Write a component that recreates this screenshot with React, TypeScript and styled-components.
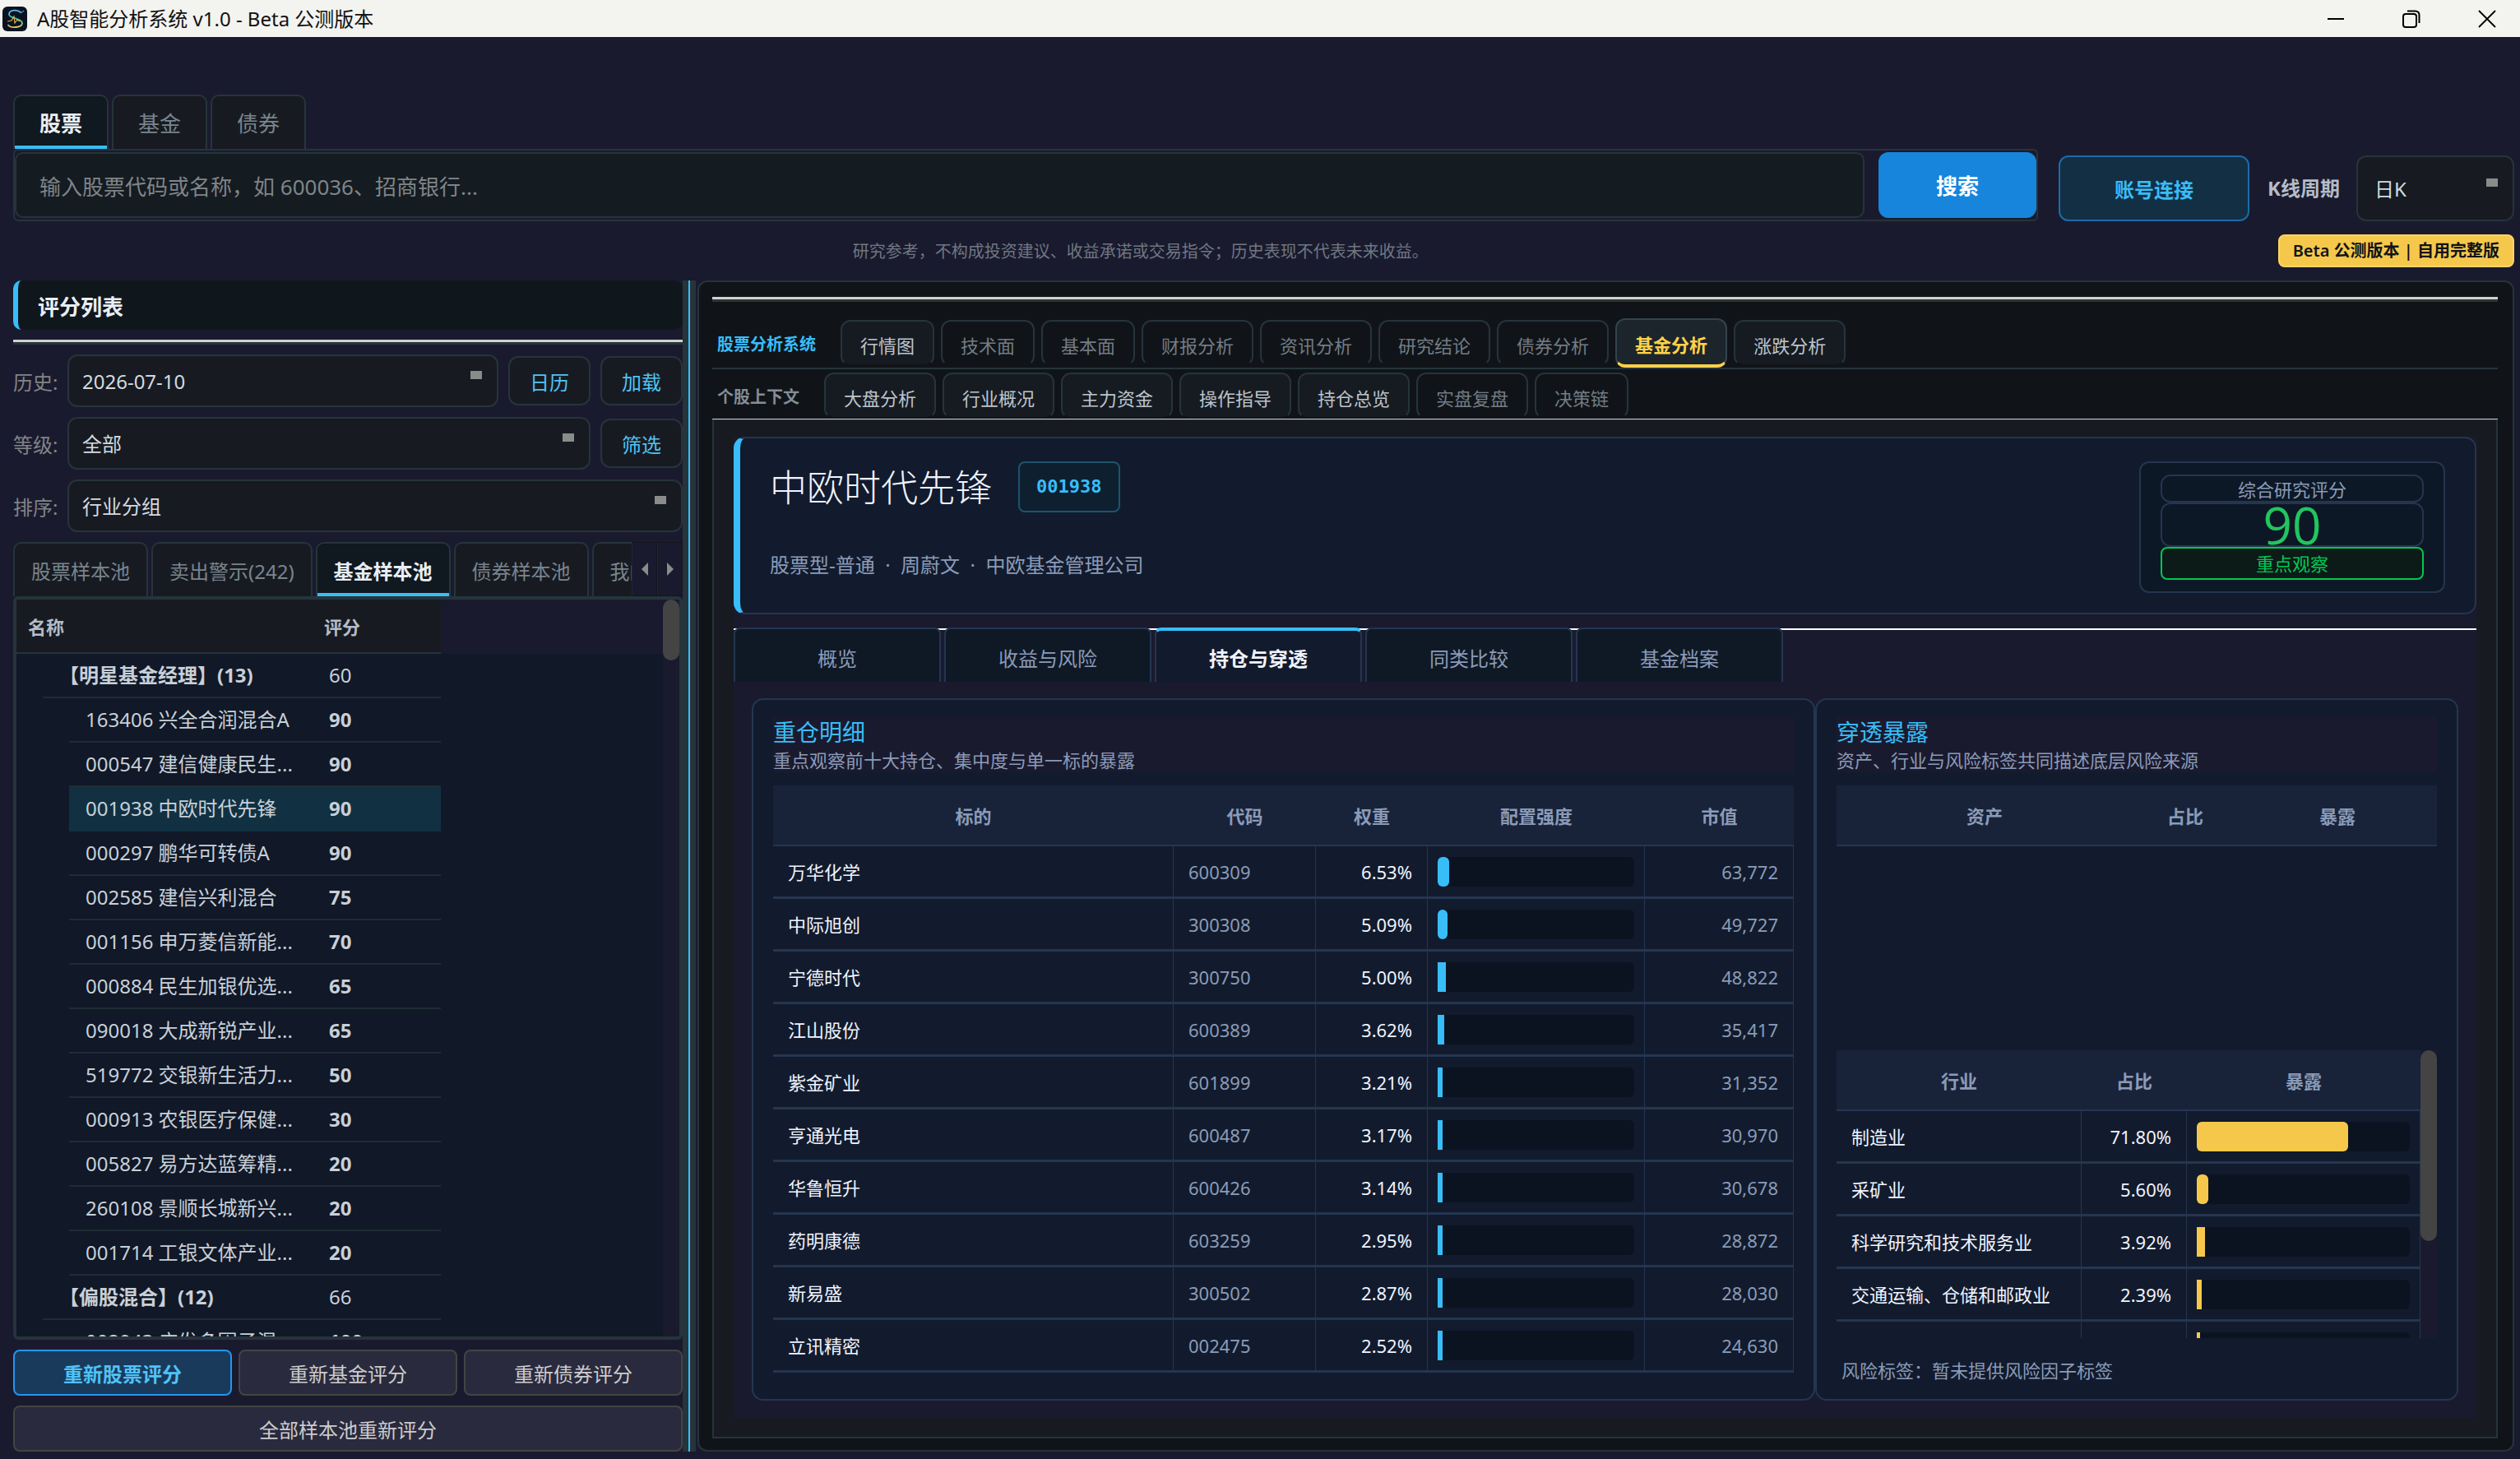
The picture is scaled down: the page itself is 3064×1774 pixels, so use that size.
import React from 'react';
import styled, { createGlobalStyle, css } from 'styled-components';

const SANS = `"Noto Sans", "Noto Sans CJK SC", sans-serif`;

const c = {
  page: '#1a1a2e',
  panel: '#101418',
  surface: '#171b21',
  line: '#26343b',
  card: '#121b2d',
  cardLine: '#253550',
  head: '#18233a',
  accent: '#38bdf8',
  muted: '#8b9bb8',
  dim: '#7a848e',
  text: '#c8d0d8',
  gold: '#f5c84c',
  selected: '#113142',
};

const GlobalStyle = createGlobalStyle`
  *, *::before, *::after { box-sizing: border-box; }
  body { margin: 0; background: ${c.page}; font-family: ${SANS}; color: ${c.text}; }
  button, input, select { font-family: inherit; margin: 0; }
  button { padding: 0; cursor: pointer; }
`;

const Window = styled.div`
  display: flex;
  flex-direction: column;
  height: 100vh;
  overflow: hidden;
`;

/* ---------- title bar ---------- */

const TitleBar = styled.header`
  display: flex;
  align-items: center;
  flex: none;
  height: 45px;
  padding-left: 3px;
  background: #f3f3f0;
  color: #111;
`;

const AppTitle = styled.h1`
  flex: 1;
  margin: 0 0 0 12px;
  font-size: 24px;
  line-height: 36px;
  font-weight: 400;
`;

const WindowControls = styled.div`
  display: flex;
  gap: 12px;
`;

const WindowButton = styled.button`
  display: flex;
  align-items: center;
  justify-content: center;
  width: 80px;
  height: 42px;
  border: 0;
  background: none;
`;

/* ---------- search area ---------- */

const TopArea = styled.section`
  flex: none;
  padding: 70px 7px 16px 16px;
`;

const MarketTabs = styled.div`
  display: flex;
  gap: 4px;
`;

const FolderTab = styled.button<{ $active?: boolean; $size: number }>`
  flex: none;
  height: 66px;
  padding: 0 ${p => (p.$size > 24 ? 30 : 20)}px;
  border: 2px solid ${c.line};
  border-bottom: 0;
  border-radius: 10px 10px 0 0;
  background: ${c.surface};
  color: ${c.dim};
  font-size: ${p => p.$size}px;
  white-space: nowrap;
  ${p =>
    p.$active &&
    css`
      background: #101820;
      color: #e8eef4;
      font-weight: 700;
      box-shadow: inset 0 -4px 0 ${c.accent};
    `}
`;

const SearchRow = styled.div`
  display: flex;
  align-items: flex-end;
`;

const SearchFrame = styled.form`
  display: flex;
  flex: 1;
  gap: 17px;
  padding: 2px 0;
  border: 2px solid ${c.line};
  border-radius: 6px;
`;

const SearchInput = styled.input`
  flex: 1;
  min-width: 0;
  height: 80px;
  padding: 4px 28px 0;
  border: 2px solid ${c.line};
  border-radius: 10px;
  background: #141b21;
  color: ${c.text};
  font-size: 26px;
  &::placeholder {
    color: #808488;
    opacity: 1;
  }
`;

const SearchButton = styled.button`
  width: 192px;
  height: 80px;
  border: 0;
  border-radius: 12px;
  background: #1785dc;
  color: #fff;
  font-size: 26px;
  font-weight: 700;
`;

const AccountButton = styled.button`
  width: 232px;
  height: 80px;
  margin: 0 22px 0 25px;
  border: 2px solid #1c6ba8;
  border-radius: 12px;
  background: #132f44;
  color: ${c.accent};
  font-size: 24px;
  font-weight: 700;
`;

const PeriodLabel = styled.label`
  margin-right: 20px;
  color: #b4bcc8;
  font-size: 24px;
  line-height: 80px;
  font-weight: 700;
`;

const Select = styled.select<{ $large?: boolean }>`
  appearance: none;
  ${p => (p.$large ? 'flex: none; width: 192px;' : 'flex: 1; min-width: 0;')}
  height: ${p => (p.$large ? 80 : 64)}px;
  padding: 0 ${p => (p.$large ? 20 : 16)}px;
  border: 2px solid ${c.line};
  border-radius: 12px;
  background: linear-gradient(#8b8b8b, #8b8b8b) no-repeat right 18px top ${p => (p.$large ? 26 : 18)}px / 14px 10px
    ${c.surface};
  color: #d4dae0;
  font-size: 24px;
`;

const NoticeRow = styled.div`
  display: flex;
  align-items: center;
  margin-top: 16px;
`;

const Notice = styled.p`
  flex: 1;
  margin: 0;
  padding: 2px 12px 0 0;
  color: #6f7782;
  font-size: 20px;
  line-height: 38px;
  text-align: center;
`;

const BetaBadge = styled.span`
  padding: 0 16px;
  border: 2px solid #f8d568;
  border-radius: 8px;
  background: ${c.gold};
  color: #101418;
  font-size: 20px;
  line-height: 36px;
  font-weight: 600;
`;

/* ---------- split body ---------- */

const Body = styled.main`
  display: flex;
  flex: 1;
  min-height: 0;
  padding: 0 7px 9px 16px;
`;

const Sidebar = styled.aside`
  display: flex;
  flex: none;
  flex-direction: column;
  width: 814px;
`;

const SidebarTitle = styled.h2`
  margin: 0 0 12px;
  padding: 4px 0 0 24px;
  border-left: 6px solid ${c.accent};
  border-radius: 10px;
  background: #10171c;
  color: #e8eef4;
  font-size: 26px;
  line-height: 56px;
  font-weight: 700;
`;

const Rule = styled.hr<{ $tone: string }>`
  flex: none;
  width: 100%;
  height: 6px;
  margin: 0;
  border: 0;
  border-top: 3px solid #d0d0d0;
  background: ${p => p.$tone};
`;

const Filters = styled.div`
  display: grid;
  gap: 12px;
  padding: 12px 0;
`;

const FilterRow = styled.div`
  display: flex;
  align-items: center;
  gap: 12px;
`;

const FilterLabel = styled.label`
  width: 54px;
  color: #808488;
  font-size: 24px;
  white-space: nowrap;
`;

const FilterButton = styled.button`
  width: 100px;
  height: 60px;
  border: 2px solid ${c.line};
  border-radius: 12px;
  background: ${c.surface};
  color: #4fc3f7;
  font-size: 24px;
`;

const PoolBar = styled.div`
  display: flex;
`;

const PoolTabs = styled.div`
  display: flex;
  flex: 1;
  gap: 4px;
  min-width: 0;
  overflow: hidden;
`;

const PoolScroll = styled.button`
  display: flex;
  align-items: center;
  justify-content: center;
  flex: none;
  width: 31px;
  height: 66px;
  border: 1px solid #14141f;
  border-left-color: #22223a;
  background: ${c.page};
`;

const TreeFrame = styled.div`
  display: flex;
  flex: 1;
  min-height: 0;
  overflow: hidden;
  border: 4px solid ${c.line};
  border-radius: 6px;
`;

const TreeBody = styled.div`
  flex: 1;
  overflow: hidden;
  background: linear-gradient(${c.page} 66px, #111827 66px);
`;

const Tree = styled.table`
  width: 516px;
  border-spacing: 0;
  table-layout: fixed;
  font-size: 24px;
  th {
    height: 66px;
    padding: 0 14px;
    border-bottom: 2px solid ${c.line};
    background: ${c.surface};
    color: #b4bcc8;
    font-size: 22px;
    text-align: left;
  }
  th:last-child {
    width: 156px;
  }
  td {
    height: 54px;
    padding: 0;
  }
`;

const TreeCell = styled.div<{ $bold?: boolean; $active?: boolean }>`
  height: 54px;
  padding-left: 20px;
  border-bottom: 2px solid ${p => (p.$active ? c.selected : '#1f2d34')};
  background: ${p => (p.$active ? c.selected : 'none')};
  line-height: 52px;
  white-space: nowrap;
  font-weight: ${p => (p.$bold ? 700 : 400)};
`;

const TreeName = styled(TreeCell)`
  margin-left: ${p => (p.$bold ? 32 : 64)}px;
`;

const ScrollTrack = styled.div`
  flex: none;
  width: 20px;
  background: ${c.page};
`;

const ScrollThumb = styled.div<{ $height: number }>`
  height: ${p => p.$height}px;
  border-radius: 10px;
  background: #444;
`;

const Actions = styled.div`
  display: grid;
  grid-template-columns: repeat(3, 1fr);
  gap: 12px 8px;
  padding-top: 12px;
`;

const ActionButton = styled.button<{ $primary?: boolean; $wide?: boolean }>`
  height: 56px;
  border: 2px solid #444;
  border-radius: 8px;
  background: #2a2a3e;
  color: #ccc;
  font-size: 24px;
  ${p => p.$wide && 'grid-column: 1 / -1;'}
  ${p => p.$primary && 'background: #1a3a5c; border-color: #2196f3; color: #4fc3f7; font-weight: 700;'}
`;

const Splitter = styled.div`
  display: flex;
  justify-content: center;
  flex: none;
  width: 16px;
  margin-right: 2px;
  background: ${c.line};
  &::before {
    content: '';
    width: 2px;
    background: ${c.accent};
  }
`;

/* ---------- analysis panel ---------- */

const Panel = styled.section`
  display: flex;
  flex: 1;
  flex-direction: column;
  min-width: 0;
  padding: 18px 18px 14px 16px;
  border: 2px solid ${c.line};
  border-radius: 12px;
  background: ${c.panel};
`;

const NavRow = styled.nav<{ $last?: boolean }>`
  display: flex;
  align-items: flex-end;
  gap: 8px;
  height: ${p => (p.$last ? 61 : 82)}px;
  padding-bottom: ${p => (p.$last ? 0 : 2)}px;
  border-bottom: ${p => (p.$last ? '1px solid #c9c9d0' : `2px solid ${c.line}`)};
`;

const NavTitle = styled.strong<{ $accent?: boolean }>`
  width: ${p => (p.$accent ? 148 : 128)}px;
  padding: 4px 0 0 6px;
  color: ${p => (p.$accent ? c.accent : '#848d97')};
  font-size: 20px;
  line-height: 52px;
`;

const NavTab = styled.button<{ $kind: 'on' | 'off' | 'active' }>`
  height: 56px;
  padding: 4px 22px 0;
  border: 2px solid ${c.line};
  border-bottom: 2px solid transparent;
  border-radius: 12px;
  background: ${p => (p.$kind === 'on' ? '#161b22' : 'none')};
  background-clip: padding-box;
  color: ${p => (p.$kind === 'on' ? '#bcc4cc' : '#737c85')};
  font-size: 22px;
  white-space: nowrap;
  ${p =>
    p.$kind === 'active' &&
    css`
      height: 60px;
      margin-bottom: -2px;
      border-color: #33434d;
      border-bottom: 4px solid #ffd24a;
      background: #1c252c;
      color: #ffd24a;
      font-weight: 700;
    `}
`;

const Frame = styled.div`
  display: flex;
  flex: 1;
  flex-direction: column;
  min-height: 0;
  padding: 20px 24px 24px;
  border: 2px solid ${c.line};
  border-top-width: 1px;
  background: ${c.surface};
`;

const Report = styled.div`
  display: flex;
  flex: 1;
  flex-direction: column;
  min-height: 0;
  background: ${c.page};
`;

const FundCard = styled.section`
  display: flex;
  justify-content: space-between;
  padding: 28px 36px 24px;
  border: 2px solid ${c.cardLine};
  border-left: 8px solid ${c.accent};
  border-radius: 14px;
  background: ${c.card};
`;

const FundHeading = styled.div`
  display: flex;
  align-items: center;
  gap: 32px;
`;

const FundName = styled.h2`
  margin: 0;
  padding-top: 2px;
  color: #f0f4ff;
  font-size: 45px;
  line-height: 60px;
  font-weight: 300;
`;

const FundCode = styled.span`
  padding: 0 20px;
  border: 2px solid #1d546c;
  border-radius: 8px;
  background: #0e2030;
  color: ${c.accent};
  font: 700 22px/58px 'DejaVu Sans Mono', monospace;
`;

const FundMeta = styled.p`
  margin: 44px 0 0;
  color: ${c.muted};
  font-size: 24px;
  line-height: 40px;
  white-space: pre;
`;

const ScoreBox = styled.div`
  display: grid;
  width: 372px;
  padding: 14px 24px;
  border: 2px solid ${c.cardLine};
  border-radius: 12px;
  background: #0d1826;
  text-align: center;
`;

const ScoreLabel = styled.div`
  height: 34px;
  border: 2px solid ${c.cardLine};
  border-radius: 12px;
  color: ${c.muted};
  font-size: 22px;
  line-height: 32px;
`;

const ScoreValue = styled.div`
  height: 54px;
  border: 2px solid ${c.cardLine};
  border-radius: 12px;
  color: #22c55e;
  font: 400 62px/50px 'Open Sans', sans-serif;
`;

const ScoreRating = styled.div`
  height: 40px;
  border: 2px solid #00c853;
  border-radius: 8px;
  background: #0c1a18;
  color: #00c853;
  font-size: 22px;
  line-height: 36px;
`;

const ReportTabs = styled.div`
  display: flex;
  gap: 4px;
  margin-top: 16px;
  background: linear-gradient(#fff, #fff) no-repeat 0 1px / 100% 2px;
`;

const ReportTab = styled.button<{ $active?: boolean }>`
  width: 252px;
  height: 66px;
  padding-top: 4px;
  border: 2px solid ${c.cardLine};
  border-bottom: 0;
  border-radius: 8px 8px 0 0;
  background: #0f1926;
  color: ${c.muted};
  font-size: 24px;
  ${p =>
    p.$active &&
    css`
      padding-top: 2px;
      border-top: 4px solid ${c.accent};
      background: ${c.card};
      color: #f0f4ff;
      font-weight: 700;
    `}
`;

const Cards = styled.div`
  display: grid;
  grid-template-columns: minmax(0, 1fr) 782px;
  flex: 1;
  min-height: 0;
  padding: 20px 22px;
`;

const Card = styled.section`
  display: flex;
  flex-direction: column;
  min-height: 0;
  padding: 20px 24px;
  border: 2px solid ${c.cardLine};
  border-radius: 14px;
  background: ${c.card};
`;

const CardHead = styled.header`
  margin-bottom: 16px;
  background: ${c.page};
`;

const CardTitle = styled.h3`
  margin: 0;
  color: ${c.accent};
  font-size: 28px;
  line-height: 38px;
  font-weight: 400;
`;

const CardHint = styled.p`
  margin: 0;
  color: ${c.muted};
  font-size: 22px;
  line-height: 30px;
`;

const DataTable = styled.table`
  width: 100%;
  border-spacing: 0;
  table-layout: fixed;
  color: #f0f4ff;
  font-size: 22px;
  th {
    height: 74px;
    padding: 0;
    border-bottom: 2px solid ${c.cardLine};
    background: ${c.head};
    color: ${c.muted};
    font-weight: 700;
  }
  td {
    height: 64px;
    padding: 0 18px;
    border-right: 1px solid ${c.cardLine};
    border-bottom: 3px solid ${c.cardLine};
    line-height: 30px;
    white-space: nowrap;
  }
`;

const Cell = styled.td<{ $right?: boolean; $muted?: boolean }>`
  text-align: ${p => (p.$right ? 'right' : 'left')};
  color: ${p => (p.$muted ? c.muted : '#f0f4ff')};
`;

const BarCell = styled.td`
  && {
    padding: 0 12px;
  }
`;

const Track = styled.div`
  height: 36px;
  border-radius: 6px;
  background: #0b1320;
`;

const Fill = styled.div<{ $color: string; $round: boolean }>`
  height: 36px;
  border-radius: ${p => (p.$round ? 6 : 0)}px;
  background: ${p => p.$color};
`;

const AssetArea = styled.div`
  flex: 1;
  min-height: 0;
`;

const IndustryArea = styled.div`
  display: flex;
  flex: none;
  height: 350px;
  margin-top: 16px;
  overflow: hidden;
`;

const TableHolder = styled.div`
  flex: 1;
  min-width: 0;
`;

const RiskNote = styled.p`
  margin: 24px 0 0;
  padding-left: 6px;
  color: ${c.muted};
  font-size: 22px;
  line-height: 30px;
`;

/* ---------- data ---------- */

type TreeRow = { name: string; score: number; group?: boolean; active?: boolean };

const treeRows: TreeRow[] = [
  { name: '【明星基金经理】(13)', score: 60, group: true },
  { name: '163406 兴全合润混合A', score: 90 },
  { name: '000547 建信健康民生...', score: 90 },
  { name: '001938 中欧时代先锋', score: 90, active: true },
  { name: '000297 鹏华可转债A', score: 90 },
  { name: '002585 建信兴利混合', score: 75 },
  { name: '001156 申万菱信新能...', score: 70 },
  { name: '000884 民生加银优选...', score: 65 },
  { name: '090018 大成新锐产业...', score: 65 },
  { name: '519772 交银新生活力...', score: 50 },
  { name: '000913 农银医疗保健...', score: 30 },
  { name: '005827 易方达蓝筹精...', score: 20 },
  { name: '260108 景顺长城新兴...', score: 20 },
  { name: '001714 工银文体产业...', score: 20 },
  { name: '【偏股混合】(12)', score: 66, group: true },
  { name: '002943 广发多因子混...', score: 100 },
];

const holdings: [string, string, number, string][] = [
  ['万华化学', '600309', 6.53, '63,772'],
  ['中际旭创', '300308', 5.09, '49,727'],
  ['宁德时代', '300750', 5.0, '48,822'],
  ['江山股份', '600389', 3.62, '35,417'],
  ['紫金矿业', '601899', 3.21, '31,352'],
  ['亨通光电', '600487', 3.17, '30,970'],
  ['华鲁恒升', '600426', 3.14, '30,678'],
  ['药明康德', '603259', 2.95, '28,872'],
  ['新易盛', '300502', 2.87, '28,030'],
  ['立讯精密', '002475', 2.52, '24,630'],
];

const industries: [string, number | null][] = [
  ['制造业', 71.8],
  ['采矿业', 5.6],
  ['科学研究和技术服务业', 3.92],
  ['交通运输、仓储和邮政业', 2.39],
  ['', null],
];

type Nav = [string, 'on' | 'off' | 'active'];

const systemNav: Nav[] = [
  ['行情图', 'on'],
  ['技术面', 'off'],
  ['基本面', 'off'],
  ['财报分析', 'off'],
  ['资讯分析', 'off'],
  ['研究结论', 'off'],
  ['债券分析', 'off'],
  ['基金分析', 'active'],
  ['涨跌分析', 'on'],
];

const contextNav: Nav[] = [
  ['大盘分析', 'on'],
  ['行业概况', 'on'],
  ['主力资金', 'on'],
  ['操作指导', 'on'],
  ['持仓总览', 'on'],
  ['实盘复盘', 'off'],
  ['决策链', 'off'],
];

const pools = ['股票样本池', '卖出警示(242)', '基金样本池', '债券样本池', '我的自选'];
const reportTabs = ['概览', '收益与风险', '持仓与穿透', '同类比较', '基金档案'];

/* ---------- small parts ---------- */

function AppLogo() {
  return (
    <svg width="30" height="30" viewBox="0 0 30 30" aria-hidden="true">
      <defs>
        <linearGradient id="s" x1="0" y1="0" x2="0" y2="1">
          <stop offset="0" stopColor="#5fb8f0" />
          <stop offset="0.5" stopColor="#2fc9a8" />
          <stop offset="1" stopColor="#e8c85a" />
        </linearGradient>
      </defs>
      <rect width="30" height="30" rx="6" fill="#0b1220" />
      <path
        d="M22 7C18 3 8 4 8 9.500C8 14.500 24 14.500 24 20C24 26 10 26.500 7 22.500"
        fill="none"
        stroke="url(#s)"
        strokeWidth="1.800"
        strokeLinecap="round"
      />
      <path d="M6 18L11 17L14 12L15 20L18 16L21 18" fill="none" stroke="#e0b050" strokeWidth="1.200" />
      <path d="M22 8L26 5" stroke="#4a90c0" strokeWidth="1.200" />
    </svg>
  );
}

function Bar({ value, color }: { value: number; color: string }) {
  return (
    <Track>
      <Fill $color={color} $round={value > 5.05} style={{ width: `round(down, ${value}%, 2px)` }} />
    </Track>
  );
}

function NavTabs({ items }: { items: Nav[] }) {
  return (
    <>
      {items.map(([name, kind]) => (
        <NavTab key={name} $kind={kind}>
          {name}
        </NavTab>
      ))}
    </>
  );
}

/* ---------- app ---------- */

export default function App() {
  return (
    <Window>
      <GlobalStyle />
      <TitleBar>
        <AppLogo />
        <AppTitle>A股智能分析系统 v1.0 - Beta 公测版本</AppTitle>
        <WindowControls>
          <WindowButton aria-label="最小化">
            <svg width="22" height="22" viewBox="0 0 22 22">
              <path d="M1 11H21" stroke="#000" strokeWidth="2" />
            </svg>
          </WindowButton>
          <WindowButton aria-label="还原">
            <svg width="22" height="22" viewBox="0 0 22 22" fill="none" stroke="#000" strokeWidth="2">
              <rect x="1" y="5" width="16" height="16" rx="3" />
              <path d="M6 1.500H16A4.500 4.500 0 0 1 20.500 6V16" />
            </svg>
          </WindowButton>
          <WindowButton aria-label="关闭">
            <svg width="22" height="22" viewBox="0 0 22 22">
              <path d="M1 1L21 21M21 1L1 21" stroke="#000" strokeWidth="1.800" />
            </svg>
          </WindowButton>
        </WindowControls>
      </TitleBar>

      <TopArea>
        <MarketTabs role="tablist">
          {['股票', '基金', '债券'].map((name, i) => (
            <FolderTab key={name} role="tab" aria-selected={i === 0} $active={i === 0} $size={26}>
              {name}
            </FolderTab>
          ))}
        </MarketTabs>
        <SearchRow>
          <SearchFrame onSubmit={e => e.preventDefault()}>
            <SearchInput aria-label="搜索" placeholder="输入股票代码或名称，如 600036、招商银行..." />
            <SearchButton type="submit">搜索</SearchButton>
          </SearchFrame>
          <AccountButton>账号连接</AccountButton>
          <PeriodLabel htmlFor="period">K线周期</PeriodLabel>
          <Select id="period" $large>
            <option>日K</option>
          </Select>
        </SearchRow>
        <NoticeRow>
          <Notice>研究参考，不构成投资建议、收益承诺或交易指令；历史表现不代表未来收益。</Notice>
          <BetaBadge>Beta 公测版本 | 自用完整版</BetaBadge>
        </NoticeRow>
      </TopArea>

      <Body>
        <Sidebar>
          <SidebarTitle>评分列表</SidebarTitle>
          <Rule $tone={c.line} />
          <Filters>
            <FilterRow>
              <FilterLabel htmlFor="history">历史:</FilterLabel>
              <Select id="history">
                <option>2026-07-10</option>
              </Select>
              <FilterButton>日历</FilterButton>
              <FilterButton>加载</FilterButton>
            </FilterRow>
            <FilterRow>
              <FilterLabel htmlFor="level">等级:</FilterLabel>
              <Select id="level">
                <option>全部</option>
              </Select>
              <FilterButton>筛选</FilterButton>
            </FilterRow>
            <FilterRow>
              <FilterLabel htmlFor="order">排序:</FilterLabel>
              <Select id="order">
                <option>行业分组</option>
              </Select>
            </FilterRow>
          </Filters>
          <PoolBar>
            <PoolTabs role="tablist">
              {pools.map((name, i) => (
                <FolderTab key={name} role="tab" aria-selected={i === 2} $active={i === 2} $size={24}>
                  {name}
                </FolderTab>
              ))}
            </PoolTabs>
            <PoolScroll aria-label="向左">
              <svg width="10" height="18" viewBox="0 0 10 18">
                <path d="M9 1V17L1 9Z" fill="#8b8b8b" />
              </svg>
            </PoolScroll>
            <PoolScroll aria-label="向右">
              <svg width="10" height="18" viewBox="0 0 10 18">
                <path d="M1 1V17L9 9Z" fill="#8b8b8b" />
              </svg>
            </PoolScroll>
          </PoolBar>
          <TreeFrame>
            <TreeBody>
              <Tree>
                <thead>
                  <tr>
                    <th>名称</th>
                    <th>评分</th>
                  </tr>
                </thead>
                <tbody>
                  {treeRows.map(row => (
                    <tr key={row.name}>
                      <td>
                        <TreeName $bold={row.group} $active={row.active}>
                          {row.name}
                        </TreeName>
                      </td>
                      <td>
                        <TreeCell $bold={!row.group} $active={row.active}>
                          {row.score}
                        </TreeCell>
                      </td>
                    </tr>
                  ))}
                </tbody>
              </Tree>
            </TreeBody>
            <ScrollTrack>
              <ScrollThumb $height={74} />
            </ScrollTrack>
          </TreeFrame>
          <Actions>
            <ActionButton $primary>重新股票评分</ActionButton>
            <ActionButton>重新基金评分</ActionButton>
            <ActionButton>重新债券评分</ActionButton>
            <ActionButton $wide>全部样本池重新评分</ActionButton>
          </Actions>
        </Sidebar>

        <Splitter />

        <Panel>
          <Rule $tone="#333" />
          <NavRow>
            <NavTitle $accent>股票分析系统</NavTitle>
            <NavTabs items={systemNav} />
          </NavRow>
          <NavRow $last>
            <NavTitle>个股上下文</NavTitle>
            <NavTabs items={contextNav} />
          </NavRow>
          <Frame>
            <Report>
              <FundCard>
                <div>
                  <FundHeading>
                    <FundName>中欧时代先锋</FundName>
                    <FundCode>001938</FundCode>
                  </FundHeading>
                  <FundMeta>{'股票型-普通  ·  周蔚文  ·  中欧基金管理公司'}</FundMeta>
                </div>
                <ScoreBox>
                  <ScoreLabel>综合研究评分</ScoreLabel>
                  <ScoreValue>90</ScoreValue>
                  <ScoreRating>重点观察</ScoreRating>
                </ScoreBox>
              </FundCard>

              <ReportTabs role="tablist">
                {reportTabs.map((name, i) => (
                  <ReportTab key={name} role="tab" aria-selected={i === 2} $active={i === 2}>
                    {name}
                  </ReportTab>
                ))}
              </ReportTabs>

              <Cards>
                <Card>
                  <CardHead>
                    <CardTitle>重仓明细</CardTitle>
                    <CardHint>重点观察前十大持仓、集中度与单一标的暴露</CardHint>
                  </CardHead>
                  <DataTable>
                    <colgroup>
                      <col />
                      <col width="173" />
                      <col width="136" />
                      <col width="264" />
                      <col width="181" />
                    </colgroup>
                    <thead>
                      <tr>
                        <th>标的</th>
                        <th>代码</th>
                        <th>权重</th>
                        <th>配置强度</th>
                        <th>市值</th>
                      </tr>
                    </thead>
                    <tbody>
                      {holdings.map(([name, code, weight, value]) => (
                        <tr key={code}>
                          <Cell>{name}</Cell>
                          <Cell $muted>{code}</Cell>
                          <Cell $right>{weight.toFixed(2)}%</Cell>
                          <BarCell>
                            <Bar value={weight} color={c.accent} />
                          </BarCell>
                          <Cell $right $muted>
                            {value}
                          </Cell>
                        </tr>
                      ))}
                    </tbody>
                  </DataTable>
                </Card>

                <Card>
                  <CardHead>
                    <CardTitle>穿透暴露</CardTitle>
                    <CardHint>资产、行业与风险标签共同描述底层风险来源</CardHint>
                  </CardHead>
                  <AssetArea>
                    <DataTable>
                      <colgroup>
                        <col />
                        <col width="128" />
                        <col width="242" />
                      </colgroup>
                      <thead>
                        <tr>
                          <th>资产</th>
                          <th>占比</th>
                          <th>暴露</th>
                        </tr>
                      </thead>
                    </DataTable>
                  </AssetArea>
                  <IndustryArea>
                    <TableHolder>
                      <DataTable>
                        <colgroup>
                          <col />
                          <col width="128" />
                          <col width="284" />
                        </colgroup>
                        <thead>
                          <tr>
                            <th>行业</th>
                            <th>占比</th>
                            <th>暴露</th>
                          </tr>
                        </thead>
                        <tbody>
                          {industries.map(([name, share], i) => (
                            <tr key={i}>
                              <Cell>{name}</Cell>
                              <Cell $right>{share === null ? '' : `${share.toFixed(2)}%`}</Cell>
                              <BarCell>
                                <Bar value={share ?? 1.7} color={c.gold} />
                              </BarCell>
                            </tr>
                          ))}
                        </tbody>
                      </DataTable>
                    </TableHolder>
                    <ScrollTrack>
                      <ScrollThumb $height={232} />
                    </ScrollTrack>
                  </IndustryArea>
                  <RiskNote>风险标签：暂未提供风险因子标签</RiskNote>
                </Card>
              </Cards>
            </Report>
          </Frame>
        </Panel>
      </Body>
    </Window>
  );
}
